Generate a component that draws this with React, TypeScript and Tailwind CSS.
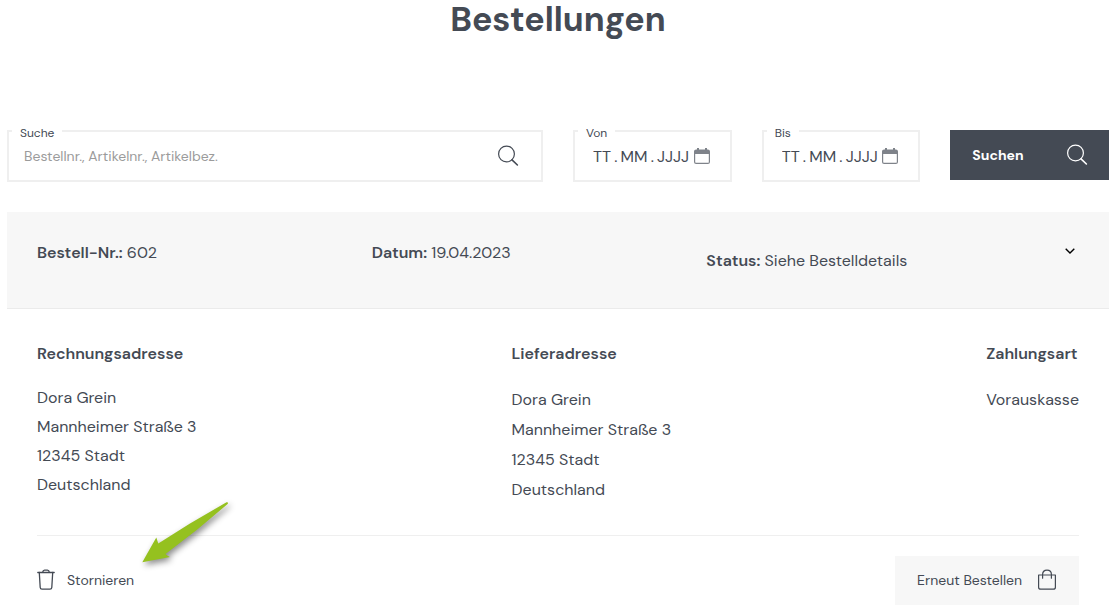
import React, { useState } from 'react';

const SearchIcon = ({ className = '' }) => (
    <svg width="22" height="22" viewBox="0 0 22 22" fill="none" stroke="currentColor" strokeWidth="1.2" strokeLinecap="round" className={className} aria-hidden="true">
        <circle cx="9.5" cy="9" r="7.9" />
        <path d="M15 14.8l5.4 5.2" strokeWidth="1.6" />
    </svg>
);

const CalendarIcon = () => (
    <svg width="16" height="16" viewBox="0 0 16 16" aria-hidden="true">
        <path d="M1 2h14v4H1z" fill="#7f838a" />
        <path d="M3 0h2v3H3zM11 0h2v3h-2z" fill="#7f838a" />
        <rect x="0.6" y="2.1" width="14.8" height="13.3" rx="1.5" fill="none" stroke="#7f838a" strokeWidth="1.2" />
    </svg>
);

const TrashIcon = () => (
    <svg width="18" height="22" viewBox="0 0 18 22" fill="none" stroke="currentColor" strokeWidth="1.3" strokeLinecap="round" strokeLinejoin="round" aria-hidden="true">
        <path d="M.8 3.5h16.4M5.5 3.3c.4-1.6 1-2.2 2-2.2h3c1 0 1.6.6 2 2.2" />
        <path d="M2.3 3.5l.9 15c.1 1.1.7 1.7 1.8 1.7h8c1.1 0 1.7-.6 1.8-1.7l.9-15" />
    </svg>
);

const BagIcon = () => (
    <svg width="20" height="22" viewBox="0 0 20 22" fill="none" stroke="currentColor" strokeWidth="1.2" strokeLinecap="round" strokeLinejoin="round" aria-hidden="true">
        <path d="M1.6 6h16.8v12.2c0 1.4-.7 2-2.1 2H3.7c-1.4 0-2.1-.6-2.1-2z" />
        <path d="M5.6 9.2V5.4c0-2.6 1.8-4.3 4.4-4.3s4.4 1.7 4.4 4.3v3.8" />
    </svg>
);

const fieldBox = 'relative flex h-[52px] items-center border-2 border-[#efefef]';
const fieldLabel = 'absolute -top-[7px] left-[3px] bg-white px-2 text-xs leading-4';

interface DateFieldProps {
    id: string;
    label: string;
}

const DateField: React.FC<DateFieldProps> = ({ id, label }) => (
    <div className={`${fieldBox} col-span-2 pr-5 pl-[18px]`}>
        <label htmlFor={id} className={fieldLabel}>{label}</label>
        <input
            id={id}
            type="text"
            placeholder={'TT\u2009.\u2009MM\u2009.\u2009JJJJ'}
            className="w-full min-w-0 flex-1 bg-transparent pt-px outline-none placeholder:text-[#444a54]"
        />
        <button type="button" aria-label={`${label}: Kalender`} className="shrink-0">
            <CalendarIcon />
        </button>
    </div>
);

const address = ['Dora Grein', 'Mannheimer Straße 3', '12345 Stadt', 'Deutschland'];

const App = () => {
    const [query, setQuery] = useState('');
    const [open, setOpen] = useState(true);

    return (
        <main className="pr-2 pl-[7px] font-['DM_Sans','Inter',sans-serif] text-base text-[#444a54]">
            <h1 className="pb-[90px] text-center text-[34px] leading-10 font-bold">Bestellungen</h1>

            <form className="grid grid-cols-12 items-start gap-[30px]" onSubmit={(e) => e.preventDefault()}>
                <div className={`${fieldBox} col-span-6 pr-[22px] pl-[15px]`}>
                    <label htmlFor="search" className={fieldLabel}>Suche</label>
                    <input
                        id="search"
                        type="text"
                        value={query}
                        onChange={(e) => setQuery(e.target.value)}
                        placeholder="Bestellnr., Artikelnr., Artikelbez."
                        className="min-w-0 flex-1 bg-transparent text-sm outline-none placeholder:text-[#9b9b9b]"
                    />
                    <SearchIcon />
                </div>
                <DateField id="from" label="Von" />
                <DateField id="to" label="Bis" />
                <button type="submit" className="col-span-2 flex h-[50px] items-center justify-between bg-[#444a54] pr-[21px] pl-[22px] text-sm font-bold text-white">
                    Suchen
                    <SearchIcon />
                </button>
            </form>

            <section className="mt-[30px]">
                <header className="flex items-start border-b border-[#ebebeb] bg-[#f7f7f7] px-[30px] pt-[29px] pb-[35px]">
                    <p className="flex-1 leading-6"><b className="font-semibold">Bestell-Nr.:</b> 602</p>
                    <p className="flex-1 leading-6"><b className="font-semibold">Datum:</b> 19.04.2023</p>
                    <p className="flex-1 pt-2 leading-6"><b className="font-semibold">Status:</b> Siehe Bestelldetails</p>
                    <button type="button" aria-label="Details" aria-expanded={open} onClick={() => setOpen(!open)} className="flex h-5 w-[38px] items-center justify-end pr-1">
                        <svg width="10" height="6" viewBox="0 0 10 6" fill="none" stroke="#000" strokeWidth="1.4" aria-hidden="true">
                            <path d="M0.7 0.7L5 4.9l4.3-4.2" />
                        </svg>
                    </button>
                </header>

                {open && (
                    <div className="px-[30px] pt-[33px]">
                        <div className="flex justify-between border-b border-[#efefef] pb-[30px]">
                            <div>
                                <h2 className="pb-[17px] leading-6 font-semibold">Rechnungsadresse</h2>
                                {address.map(line => <p key={line} className="leading-[29px]">{line}</p>)}
                            </div>
                            <div>
                                <h2 className="pb-[19px] leading-6 font-semibold">Lieferadresse</h2>
                                {address.map(line => <p key={line} className="leading-[30px]">{line}</p>)}
                            </div>
                            <div>
                                <h2 className="pb-[19px] leading-6 font-semibold">Zahlungsart</h2>
                                <p className="leading-[30px]">Vorauskasse</p>
                            </div>
                        </div>

                        <div className="relative flex items-center justify-between pt-5 text-sm">
                            <button type="button" className="flex items-center gap-3 pb-0.5">
                                <TrashIcon />
                                Stornieren
                            </button>
                            <button type="button" className="flex h-[49px] items-center gap-[15px] bg-[#f7f7f7] px-[22px] pb-0.5">
                                Erneut Bestellen
                                <BagIcon />
                            </button>

                            {/* Arrow pointing at the cancel button */}
                            <svg width="100" height="76" viewBox="0 0 100 76" className="pointer-events-none absolute -top-[36px] left-[103px] drop-shadow-[2px_3px_3px_rgba(0,0,0,0.45)]" aria-hidden="true">
                                <path d="M2.3 62.3L16.3 37.5 18.3 43.6 50 23.5 86.5 2.3Q88.8 2 87.6 4L57 29.8 25.5 54Q27.5 56 30 57z" fill="#95c11f" />
                            </svg>
                        </div>
                    </div>
                )}
            </section>
        </main>
    );
};

export default App;
